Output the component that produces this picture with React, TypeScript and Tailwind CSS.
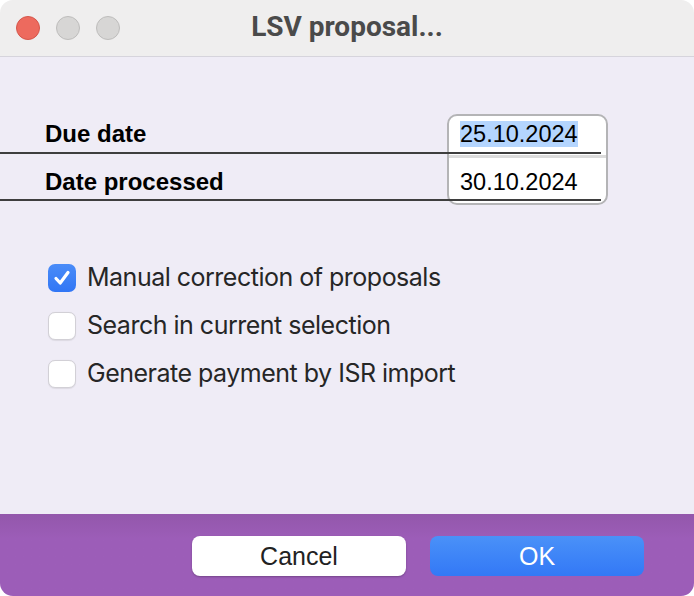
import React from "react";

const Check = ({ checked, label }: { checked?: boolean; label: string }) => (
  <label className="flex items-center gap-[11px] h-[48px]">
    {checked ? (
      <span className="w-[28px] h-[28px] rounded-[7px] bg-gradient-to-b from-[#4a8cf8] to-[#3176f5] flex items-center justify-center">
        <svg width="20" height="20" viewBox="0 0 20 20" fill="none">
          <path d="M4 10.5 L8.2 15 L16 4.5" stroke="white" strokeWidth="3.2" strokeLinecap="round" strokeLinejoin="round" />
        </svg>
      </span>
    ) : (
      <span className="w-[28px] h-[28px] rounded-[7px] bg-white border border-[#d2d0d6] shadow-[0_0.5px_1px_rgba(0,0,0,0.08)]" />
    )}
    <span className="text-[25px] text-[#262626] font-['Inter','Liberation_Sans',sans-serif] tracking-[-0.5px]">{label}</span>
  </label>
);

export default function App() {
  return (
    <div className="w-[694px] h-[596px] bg-white">
      <div className="w-full h-full flex flex-col rounded-[13px] overflow-hidden">
        <div className="h-[57px] shrink-0 bg-[#efeeee] border-b border-[#d6d4dc] relative flex items-center">
          <div className="flex items-center gap-[16px] pl-[16px]">
            <span className="w-[24px] h-[24px] rounded-full bg-[#ed6a5e] border border-[#d5564b]" />
            <span className="w-[24px] h-[24px] rounded-full bg-[#d7d6d5] border border-[#bebdbc]" />
            <span className="w-[24px] h-[24px] rounded-full bg-[#d7d6d5] border border-[#bebdbc]" />
          </div>
          <div className="absolute inset-0 flex items-center justify-center pb-[2px]">
            <span className="text-[28px] font-bold text-[#4a4a4a] font-['Roboto','Liberation_Sans',sans-serif]">LSV proposal...</span>
          </div>
        </div>

        <div className="flex-1 bg-[#efecf6] pt-[50px]">
          <div className="relative">
            <div className="absolute left-[447px] top-[7px] w-[161px] h-[91px] rounded-[10px] border-2 border-[#b4b4b6] bg-white overflow-hidden">
              <div className="mt-[39px] h-[3px] bg-[#dcdcdc]" />
            </div>
            <div className="relative w-[601px] font-['Liberation_Sans',Arial,sans-serif] text-[23.5px] text-black">
              <div className="h-[47px] border-b-2 border-[#3e3e3e] flex items-end pb-[5px] leading-[26px]">
                <span className="font-bold text-[24px] pl-[45px] w-[460px]">Due date</span>
                <span className="bg-[#b4d5fe]">25.10.2024</span>
              </div>
              <div className="h-[47px] border-b-2 border-[#3e3e3e] flex items-end pb-[4px] leading-[26px]">
                <span className="font-bold text-[24px] pl-[45px] w-[460px]">Date processed</span>
                <span>30.10.2024</span>
              </div>
            </div>
          </div>

          <div className="pl-[48px] mt-[53px] flex flex-col">
            <Check checked label="Manual correction of proposals" />
            <Check label="Search in current selection" />
            <Check label="Generate payment by ISR import" />
          </div>
        </div>

        <div className="h-[82px] shrink-0 bg-gradient-to-b from-[#9357ab] to-[#9c5db8] to-[30%] flex items-start justify-end gap-[24px] pr-[50px] pt-[22px] font-['Liberation_Sans',Arial,sans-serif]">
          <button className="w-[214px] h-[40px] rounded-[8px] bg-white text-[25px] text-[#222] shadow-[0_1px_2px_rgba(0,0,0,0.25)] leading-none">
            Cancel
          </button>
          <button className="w-[214px] h-[40px] rounded-[8px] bg-gradient-to-b from-[#4a91f8] to-[#3378f6] text-[25px] text-white leading-none">
            OK
          </button>
        </div>
      </div>
    </div>
  );
}
